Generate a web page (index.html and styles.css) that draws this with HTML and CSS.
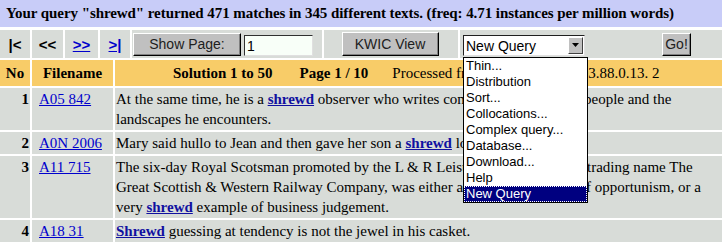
FILE: index.html
```html
<html>
	<head>
		<title>BNC query result</title>
		<meta charset="utf-8">
		<link rel="stylesheet" href="styles.css">
	</head>
	<body>
		<div class="summary">Your query "shrewd" returned 471 matches in 345 different texts. (freq: 4.71 instances per million words)</div>
		<div class="toolbar">
			<div class="tool nav-first">|&lt;</div>
			<div class="tool nav-prev">&lt;&lt;</div>
			<div class="tool nav-next"><a href="#">&gt;&gt;</a></div>
			<div class="tool nav-last"><a href="#">&gt;|</a></div>
			<div class="tool tool-page">
				<button class="btn btn-page">Show Page:</button>
				<input class="page-input" type="text" value="1">
			</div>
			<div class="tool tool-kwic">
				<button class="btn btn-kwic">KWIC View</button>
			</div>
			<div class="tool tool-action">
				<div class="select">
					<span class="select-value">New Query</span>
					<span class="select-arrow"><svg width="9" height="5" viewBox="0 0 9 5"><path d="M1 0h7L4.5 4z" fill="#000"/></svg></span>
				</div>
				<button class="btn btn-go">Go!</button>
			</div>
		</div>
		<div class="results">
			<div class="hd hd-no">No</div>
			<div class="hd hd-file">Filename</div>
			<div class="hd hd-info"><b class="sol">Solution 1 to 50</b><b class="pg">Page 1 / 10</b><span class="proc">Processed from the cqpserver 193.88.0.13. 2</span></div>

			<div class="num">1</div>
			<div class="file"><a href="#">A05 842</a></div>
			<div class="text">At the same time, he is a <a class="hit" href="#">shrewd</a> observer who writes compassionately about people and the landscapes he encounters.</div>

			<div class="num">2</div>
			<div class="file"><a href="#">A0N 2006</a></div>
			<div class="text">Mary said hullo to Jean and then gave her son a <a class="hit" href="#">shrewd</a> look.</div>

			<div class="num">3</div>
			<div class="file"><a href="#">A11 715</a></div>
			<div class="text">The six-day Royal Scotsman promoted by the L &amp; R Leisure Group under the trading name The Great Scottish &amp; Western Railway Company, was either a remarkable stroke of opportunism, or a very <a class="hit" href="#">shrewd</a> example of business judgement.</div>

			<div class="num">4</div>
			<div class="file"><a href="#">A18 31</a></div>
			<div class="text"><a class="hit" href="#">Shrewd</a> guessing at tendency is not the jewel in his casket.</div>
		</div>
		<ul class="dropdown">
			<li>Thin...</li>
			<li>Distribution</li>
			<li>Sort...</li>
			<li>Collocations...</li>
			<li>Complex query...</li>
			<li>Database...</li>
			<li>Download...</li>
			<li>Help</li>
			<li class="selected">New Query</li>
		</ul>
	</body>
</html>
```
FILE: styles.css
```css
body {
	margin: 0;
	background: #ffffff;
	font-family: "Liberation Serif", "Times New Roman", serif;
	font-size: 15px;
	color: #000;
}
a {
	color: #0000cc;
}
.summary {
	background: #c8ccf8;
	height: 27px;
	line-height: 27px;
	padding-left: 6px;
	font-weight: bold;
	font-size: 15px;
	letter-spacing: -0.07px;
	white-space: nowrap;
	overflow: hidden;
}
.toolbar {
	display: flex;
	gap: 2px;
	margin-top: 3px;
	height: 28px;
	font-family: "Liberation Sans", Arial, sans-serif;
}
.tool {
	background: #d8dcd8;
	display: flex;
	align-items: center;
}
.nav-first, .nav-prev, .nav-next, .nav-last {
	justify-content: center;
	font-weight: bold;
	font-size: 15px;
}
.nav-first { width: 30px; }
.nav-prev { width: 31px; }
.nav-next { width: 33px; }
.nav-last { width: 30px; }
.tool-page {
	width: 190px;
}
.tool-kwic {
	width: 134px;
	justify-content: center;
}
.tool-action {
	flex: 1;
	padding-left: 3px;
}
.btn {
	font-family: "Liberation Sans", Arial, sans-serif;
	font-size: 14px;
	color: #202020;
	background: #c0c0c0;
	border: 1px solid;
	border-color: #ffffff #000000 #000000 #ffffff;
	box-shadow: inset -1px -1px 0 #808080;
	padding: 0;
	margin: 0;
}
.btn-page {
	width: 108px;
	height: 23px;
	margin-left: 1px;
}
.page-input {
	width: 69px;
	height: 21px;
	margin-left: 3px;
	margin-top: 3px;
	box-sizing: border-box;
	border: 1px solid;
	border-color: #303030 #e0e0e0 #e0e0e0 #303030;
	background: #f8fff8;
	font-family: "Liberation Sans", Arial, sans-serif;
	font-size: 14px;
	padding: 0 2px;
}
.btn-kwic {
	width: 97px;
	height: 24px;
	margin-left: -2px;
}
.select {
	width: 122px;
	height: 21px;
	margin-top: 3px;
	box-sizing: border-box;
	border: 1px solid;
	border-color: #202020 #e0e0e0 #e0e0e0 #202020;
	background: #ffffff;
	display: flex;
	align-items: center;
	font-size: 14px;
}
.select-value {
	flex: 1;
	padding-left: 2px;
}
.select-arrow {
	width: 15px;
	height: 17px;
	margin-right: 1px;
	background: #c0c0c0;
	border: 1px solid;
	border-color: #ffffff #404040 #404040 #ffffff;
	box-sizing: border-box;
	display: flex;
	align-items: center;
	justify-content: center;
}
.btn-go {
	width: 29px;
	height: 23px;
	margin-left: 77px;
}
.results {
	display: grid;
	grid-template-columns: 30px 81px 1fr;
	gap: 2px;
	margin-top: 2px;
}
.hd {
	background: #f8cc68;
	font-weight: bold;
	text-align: center;
	height: 26px;
	line-height: 26px;
	white-space: nowrap;
}
.hd-info {
	font-weight: normal;
	text-align: left;
	padding-left: 58px;
}
.pg {
	margin-left: 27px;
}
.proc {
	margin-left: 24px;
}
.num, .file, .text {
	background: #d8dcd8;
	line-height: 20px;
	padding-top: 1px;
	padding-bottom: 1px;
}
.num {
	font-weight: bold;
	text-align: right;
	padding-right: 1px;
}
.file {
	padding-left: 7px;
}
.text {
	padding-left: 1px;
	padding-right: 2px;
}
.hit {
	font-weight: bold;
	color: #1010a0;
}
.dropdown {
	position: absolute;
	left: 463px;
	top: 57px;
	width: 123px;
	margin: 0;
	padding: 0;
	list-style: none;
	background: #ffffff;
	border: 1px solid #000000;
	font-family: "Liberation Sans", Arial, sans-serif;
	font-size: 13px;
}
.dropdown li {
	height: 16px;
	line-height: 16px;
	padding-left: 2px;
}
.dropdown .selected {
	background: #000080;
	color: #ffffff;
	outline: 1px dotted #ffffff;
	outline-offset: -1px;
}
```
